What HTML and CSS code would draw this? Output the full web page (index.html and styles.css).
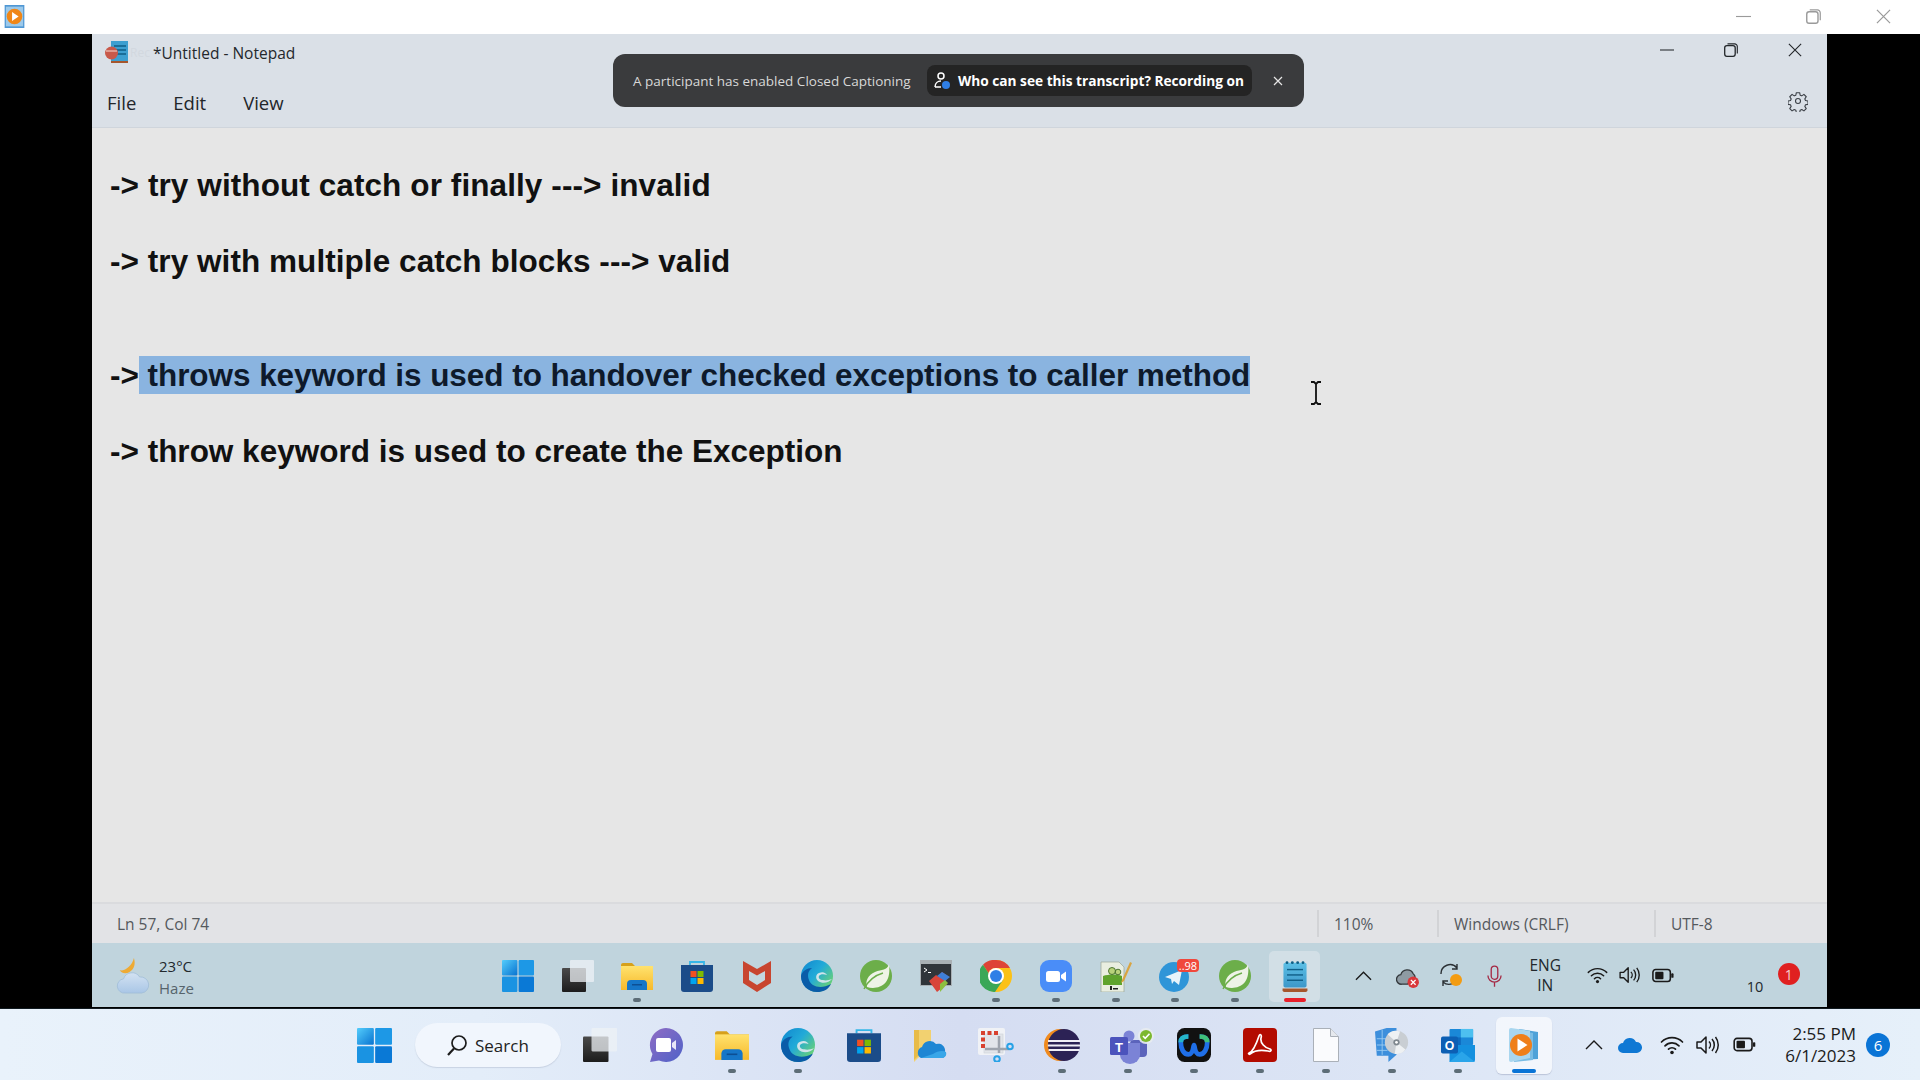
FILE: index.html
```html
<!DOCTYPE html>
<html lang="en">
<head>
<meta charset="utf-8">
<title>Untitled - Notepad</title>
<link rel="stylesheet" href="styles.css">
</head>
<body>
<svg class="defs" aria-hidden="true">
  <defs>
    <linearGradient id="gStart" x1="0" y1="0" x2="1" y2="1"><stop offset="0" stop-color="#54cdfc"/><stop offset="1" stop-color="#0873d0"/></linearGradient>
    <linearGradient id="gFolder" x1="0" y1="0" x2="0" y2="1"><stop offset="0" stop-color="#ffe26e"/><stop offset="1" stop-color="#f7b92a"/></linearGradient>
    <linearGradient id="gEdge" x1="0" y1="0" x2="1" y2=".8"><stop offset="0" stop-color="#0f86cf"/><stop offset=".5" stop-color="#22aad8"/><stop offset="1" stop-color="#72d66a"/></linearGradient>
    <linearGradient id="gDark" x1="0" y1="0" x2="0" y2="1"><stop offset="0" stop-color="#4a4a4a"/><stop offset="1" stop-color="#1c1c1c"/></linearGradient>
    <linearGradient id="gMeet" x1="0" y1="0" x2="1" y2="1"><stop offset="0" stop-color="#8f6cc4"/><stop offset="1" stop-color="#4f62c8"/></linearGradient>
    <linearGradient id="gPad" x1="0" y1="0" x2="0" y2="1"><stop offset="0" stop-color="#5cc0e6"/><stop offset="1" stop-color="#3d97c9"/></linearGradient>
    <linearGradient id="gCloud" x1="0" y1="0" x2="0" y2="1"><stop offset="0" stop-color="#d3e2f2"/><stop offset="1" stop-color="#a9c6e6"/></linearGradient>

    <symbol id="i-start" viewBox="0 0 32 32"><rect width="15.4" height="15.4" rx="1" fill="url(#gStart)"/><rect x="16.6" width="15.4" height="15.4" rx="1" fill="#1d98e6"/><rect y="16.6" width="15.4" height="15.4" rx="1" fill="#1a93e2"/><rect x="16.6" y="16.6" width="15.4" height="15.4" rx="1" fill="#0a79d6"/></symbol>
    <symbol id="i-task" viewBox="0 0 32 32"><rect x="0" y="8" width="24" height="24" rx="1" fill="url(#gDark)"/><rect x="8" y="0" width="24" height="22" rx="1" fill="#eef1f5" opacity=".75"/></symbol>
    <symbol id="i-folder" viewBox="0 0 32 32"><path d="M0 5a2 2 0 0 1 2-2h9l3 3h18v3H0z" fill="#d6a01b"/><rect y="6" width="32" height="24" fill="url(#gFolder)"/><path d="M6 30v-6a4 4 0 0 1 4-4h12a4 4 0 0 1 4 4v6z" fill="#1676c8"/><rect x="11" y="24" width="10" height="1.5" fill="#0d4f93"/></symbol>
    <symbol id="i-store" viewBox="0 0 32 32"><path d="M9 5V2h14v3" fill="none" stroke="#35b6e8" stroke-width="1.8"/><path d="M0 5h32v24a3 3 0 0 1-3 3H3a3 3 0 0 1-3-3z" fill="#1b4c89"/><rect x="9.500" y="11" width="6" height="6" fill="#f25022"/><rect x="16.500" y="11" width="6" height="6" fill="#7fba00"/><rect x="9.500" y="18" width="6" height="6" fill="#00a4ef"/><rect x="16.500" y="18" width="6" height="6" fill="#ffb900"/></symbol>
    <symbol id="i-mcafee" viewBox="0 0 32 32"><path d="M2 1l14 8 14-8v22L16 32 2 23z" fill="#c8452f"/><path d="M8 11l8 4.500 8-4.500v9l-8 5-8-5z" fill="#c3d7df"/></symbol>
    <symbol id="i-edge" viewBox="0 0 32 32"><circle cx="16" cy="16" r="16" fill="url(#gEdge)"/><path d="M30 24C27 30 22 32 16 32 7 32 0 25 0 16 1 11 6 8 11 8 7 11 6 15 8 20c2 6 11 10 22 4z" fill="#0a5ca8"/><path d="M31 19c-3 4-10 5-14 2-3-3-2-7 1-8 4-2 7 0 8 2-3-1-7-1-8 1-1 2 1 4 4 4 3 1 6 0 9-1z" fill="#d0e3ea"/></symbol>
    <symbol id="i-spring" viewBox="0 0 32 32"><circle cx="16" cy="16" r="16" fill="#6cae4a"/><path d="M29 4C27 11 22 9 15 12 8 15 5 21 7 27c6 2 14 1 19-5 3-4 4-11 3-18z" fill="#eef3e6"/><path d="M4 29c5-10 12-14 19-16" stroke="#6cae4a" stroke-width="1.400" fill="none"/></symbol>
    <symbol id="i-term" viewBox="0 0 32 32"><rect width="32" height="26" fill="#a9b0b4"/><rect x="1" y="4" width="30" height="21" fill="#30353a"/><path d="M4 8l3 2-3 2" fill="none" stroke="#fff" stroke-width="1"/><rect x="8" y="12" width="3" height="1" fill="#fff"/><path d="M9 21l7-6 3 2 3-5 7 5-4 4 2 3-10 8z" fill="#d8453a"/><path d="M17 16l5-4 8 5-5 4z" fill="#3f7fd8"/><path d="M20 24l5-4 3 3-8 9z" fill="#8cbf3f"/></symbol>
    <symbol id="i-chrome" viewBox="0 0 32 32"><circle cx="16" cy="16" r="16" fill="#fbc116"/><path d="M16 0a16 16 0 0 1 13.900 8H16a8 8 0 0 0-7.500 5L3 4.700A16 16 0 0 1 16 0z" fill="#de4437"/><path d="M3 4.700L8.500 13 15 24l-1 7.900A16 16 0 0 1 3 4.700z" fill="#3aa757"/><path d="M8 16l8 8 7-4-8 12h-1z" fill="#3aa757"/><circle cx="16" cy="16" r="8" fill="#fff"/><circle cx="16" cy="16" r="6" fill="#2f7fe6"/></symbol>
    <symbol id="i-zoom" viewBox="0 0 32 32"><rect width="32" height="32" rx="9" fill="#4a8df8"/><rect x="6" y="11" width="14" height="11" rx="2.500" fill="#fff"/><path d="M21 15l5-3.500v10L21 18z" fill="#fff"/></symbol>
    <symbol id="i-npp" viewBox="0 0 32 32"><path d="M1 2h18l5 5v25H1z" fill="#e9eee0" stroke="#9aa595" stroke-width=".7"/><path d="M3 16c6-2 14-2 19 0v9H3z" fill="#5fa32c"/><circle cx="12" cy="11" r="3.500" fill="#b8d27a" stroke="#2d5a16" stroke-width=".8"/><circle cx="18" cy="12" r="2.800" fill="#b8d27a" stroke="#2d5a16" stroke-width=".8"/><rect x="10" y="26" width="2" height="4" fill="#222"/><rect x="13" y="28" width="5" height="1.500" fill="#222"/><path d="M22 20L30 2l2 1-8 18-3 2z" fill="#d9a441"/></symbol>
    <symbol id="i-tg" viewBox="0 0 32 32"><circle cx="15" cy="17" r="15" fill="#2f95d8"/><path d="M6 17l17-7-3 15-5-4-2 3-1-5z" fill="#e8f3fa"/></symbol>
    <symbol id="i-notepad" viewBox="0 0 32 36"><rect x="3" y="3" width="26" height="28" rx="2" fill="url(#gPad)"/><g fill="#0f5f86"><circle cx="7" cy="3" r="1.600"/><circle cx="13" cy="3" r="1.600"/><circle cx="19" cy="3" r="1.600"/><circle cx="25" cy="3" r="1.600"/></g><g fill="#105f88"><rect x="7" y="10" width="18" height="1.600"/><rect x="7" y="16" width="18" height="1.600"/><rect x="7" y="22" width="18" height="1.600"/></g><path d="M2 32h28v2a2 2 0 0 1-2 2H4a2 2 0 0 1-2-2z" fill="#a5562d"/></symbol>
    <symbol id="i-meet" viewBox="0 0 34 34"><path d="M17 0a17 17 0 1 1-7 32.500L1 34l2.500-8A17 17 0 0 1 17 0z" fill="url(#gMeet)"/><rect x="7" y="10" width="15" height="14" rx="2" fill="#fff"/><path d="M23 15l4-3v10l-4-3z" fill="#e8e6f8"/></symbol>
    <symbol id="i-files" viewBox="0 0 32 34"><path d="M0 2h17v26H6l-6 6z" fill="#f5cf62" opacity=".9"/><path d="M0 2v30l5-5V2z" fill="#e8bb48"/><path d="M7 30a6 6 0 0 1 1-11 8 8 0 0 1 14-3 7 7 0 0 1 9 8 5 5 0 0 1-2 6z" fill="#1e86d4"/><path d="M7 30h22a5 5 0 0 0 3-6c-3-2-9-1-13 2z" fill="#39a6e8"/></symbol>
    <symbol id="i-snip" viewBox="0 0 36 34"><rect width="27" height="27" rx="2" fill="#f0f2f6"/><rect x="6" y="6" width="19" height="19" fill="#e2e5ea" stroke="#cdd1d8" stroke-width=".6"/><g fill="#d8412f"><rect x="3" y="3" width="4" height="4"/><rect x="9.500" y="3" width="4" height="4"/><rect x="16" y="3" width="4" height="4"/><rect x="3" y="9.500" width="4" height="4"/><rect x="3" y="16" width="4" height="4"/></g><path d="M7 21h24M21 8v17" stroke="#9ea4ad" stroke-width="2.500" fill="none"/><circle cx="32" cy="18.500" r="2.800" fill="none" stroke="#27a2e6" stroke-width="2"/><circle cx="19" cy="31" r="2.800" fill="none" stroke="#27a2e6" stroke-width="2"/></symbol>
    <symbol id="i-eclipse" viewBox="0 0 36 34"><circle cx="16" cy="17" r="16" fill="#f08a1d"/><circle cx="20" cy="17" r="16" fill="#2c2255"/><g fill="#f1eff7"><rect x="4" y="12" width="32" height="2"/><rect x="3.800" y="16.500" width="32.400" height="2"/><rect x="4.600" y="21" width="31" height="2"/></g></symbol>
    <symbol id="i-teams" viewBox="0 0 44 36"><circle cx="19" cy="8" r="5.500" fill="#7b83d6"/><rect x="20" y="12" width="17" height="17" rx="4" fill="#5b63bb"/><path d="M10 15h20v12a10 9 0 0 1-20 0z" fill="#7b83d6"/><rect y="9" width="18" height="18" rx="1.500" fill="#4b53bc"/><text class="svg-t" x="9" y="23.500" text-anchor="middle">T</text><circle cx="36" cy="8" r="8" fill="#e8ecef" opacity=".9"/><circle cx="36" cy="8" r="6" fill="#7cb82f"/><path d="M33 8l2.200 2.300L39.500 5.700" fill="none" stroke="#fff" stroke-width="1.600"/></symbol>
    <symbol id="i-webex" viewBox="0 0 36 36"><rect width="36" height="36" rx="8" fill="#111"/><path d="M12 9C7 9 4 11 4 15c0 7 3 13 8 13 6 0 5-10 6-10s0 10 6 10c5 0 8-6 8-13 0-4-3-6-8-6" fill="none" stroke="#1f6fe8" stroke-width="5"/><path d="M24 9c5 0 8 2 8 6" stroke="#3fc07a" stroke-width="5" fill="none"/><path d="M12 9C7 9 4 11 4 15" stroke="#26b6c8" stroke-width="5" fill="none"/></symbol>
    <symbol id="i-acrobat" viewBox="0 0 34 34"><rect width="34" height="34" rx="4" fill="#b30b00"/><path d="M6 25c3-1 7-8 10-17 1-3 3-1 2 2-1 5 4 10 9 11 2 1 1 3-2 2-6-1-13-1-18 3-1 1-2-1-1-1z" fill="none" stroke="#fff" stroke-width="1.700"/></symbol>
    <symbol id="i-file" viewBox="0 0 26 34"><path d="M.5.500h17l8 8v25H.5z" fill="#fafbfd" stroke="#aab0b8"/><path d="M17.500.500v8h8" fill="#e6e9ee" stroke="#aab0b8"/></symbol>
    <symbol id="i-disc" viewBox="0 0 38 38"><path d="M0 4L13 0h11v30l-9 8v-7H2z" fill="#3d8fdc"/><path d="M2 12h12M2 19h12M2 25h12M8 2v28" stroke="#9ccbf2" stroke-width="1"/><circle cx="24" cy="16" r="13" fill="#c9ced3"/><path d="M24 16L14 7a13 13 0 0 1 14-3zM24 16l10 8a13 13 0 0 1-12 5z" fill="#eef1f3"/><circle cx="24" cy="16" r="3.500" fill="#7e878e"/><circle cx="24" cy="16" r="1.500" fill="#fff"/></symbol>
    <symbol id="i-outlook" viewBox="0 0 36 36"><rect x="9" y="1" width="25" height="17" rx="1" fill="#1a88d8"/><rect x="21" y="1" width="13" height="9" fill="#4dc0f0"/><rect x="9" y="10" width="12" height="9" fill="#0e6abf"/><path d="M9 18h27v16a2 2 0 0 1-2 2H9z" fill="#1490df"/><path d="M9 36l13-11 14 11z" fill="#2aa5ea"/><rect y="9" width="18" height="18" rx="2" fill="#0c5fb4"/><text class="svg-o" x="9" y="23.500" text-anchor="middle">O</text></symbol>
    <symbol id="i-player" viewBox="0 0 30 34"><path d="M10 1l19 3v27L10 32z" fill="#4fa2d8"/><path d="M5 2l19 3v27L5 34z" fill="#79bce4"/><path d="M0 2a2 2 0 0 1 2-2l19 3v27L2 34a2 2 0 0 1-2-2z" fill="#a9d6ef"/><circle cx="12" cy="17" r="11" fill="#ef7f1a"/><path d="M8.500 10.500l10 6.500-10 6.500z" fill="#fff"/></symbol>
    <symbol id="i-wifi" viewBox="0 0 24 20"><g fill="none" stroke="#1a1a1a" stroke-width="1.700" stroke-linecap="round"><path d="M1.500 7a15 15 0 0 1 21 0"/><path d="M5 10.800a10 10 0 0 1 14 0"/><path d="M8.500 14.200a5 5 0 0 1 7 0"/></g><circle cx="12" cy="17.500" r="1.800" fill="#1a1a1a"/></symbol>
    <symbol id="i-vol" viewBox="0 0 24 20"><g fill="none" stroke="#1a1a1a" stroke-width="1.500"><path d="M1 7h4l5-5v16l-5-5H1z" stroke-linejoin="round"/><path d="M13 6.500a5 5 0 0 1 0 7"/><path d="M16 4a9 9 0 0 1 0 12"/><path d="M19.500 2a13 13 0 0 1 0 16"/></g></symbol>
    <symbol id="i-bat" viewBox="0 0 24 16"><rect x="1" y="1.500" width="19" height="13" rx="3" fill="none" stroke="#1a1a1a" stroke-width="1.700"/><rect x="3.500" y="4" width="9" height="8" rx="1" fill="#1a1a1a"/><rect x="21" y="5.500" width="2.500" height="5" rx="1" fill="#1a1a1a"/></symbol>
    <symbol id="i-chev" viewBox="0 0 18 10"><path d="M1 9l8-8 8 8" fill="none" stroke="#1a1a1a" stroke-width="1.400"/></symbol>
    <symbol id="i-min" viewBox="0 0 16 16"><path d="M0 8h16" stroke="currentColor" stroke-width="1.200"/></symbol>
    <symbol id="i-max" viewBox="0 0 16 16"><rect x=".8" y="3" width="12" height="12.200" rx="2.500" fill="none" stroke="currentColor" stroke-width="1.500"/><path d="M4 1h8a3 3 0 0 1 3.200 3v8" fill="none" stroke="currentColor" stroke-width="1.300"/></symbol>
    <symbol id="i-x" viewBox="0 0 16 16"><path d="M1 1l14 14M15 1L1 15" stroke="currentColor" stroke-width="1.300"/></symbol>
  </defs>
</svg>

<header class="appbar">
  <svg class="app-logo" viewBox="0 0 24 28"><rect width="24" height="28" fill="#4f97d4"/><rect x="1.500" y="2" width="21" height="24" fill="#9cc9ea"/><circle cx="12" cy="14" r="9.500" fill="#f08616"/><path d="M9 8.500l8 5.500-8 5.500z" fill="#fff"/></svg>
  <div class="caption-btns caption-top">
    <button class="cap"><svg class="ico-15"><use href="#i-min"/></svg></button>
    <button class="cap"><svg class="ico-15"><use href="#i-max"/></svg></button>
    <button class="cap"><svg class="ico-15"><use href="#i-x"/></svg></button>
  </div>
</header>

<main class="stage">
  <section class="win">
    <div class="win-head">
      <div class="title-row">
        <svg class="np-logo" viewBox="0 0 24 24"><rect x="6" y="1" width="17" height="20" fill="#3d9fd0"/><path d="M9 6h12M9 10h12M9 14h12" stroke="#0f5f86" stroke-width="1.300"/><rect x="6" y="21" width="17" height="2" fill="#a5562d"/><circle cx="6.500" cy="13" r="6.500" fill="#c8594a"/><path d="M1 11h11" stroke="#e8b0a6" stroke-width="1.500"/></svg>
        <span class="ghost">Rec</span>
        <span class="win-title">*Untitled - Notepad</span>
        <div class="caption-btns caption-np">
          <button class="cap"><svg class="ico-14"><use href="#i-min"/></svg></button>
          <button class="cap"><svg class="ico-14"><use href="#i-max"/></svg></button>
          <button class="cap"><svg class="ico-14"><use href="#i-x"/></svg></button>
        </div>
      </div>
      <div class="menu-row">
        <span>File</span><span>Edit</span><span>View</span>
        <svg class="gear" viewBox="0 0 24 24"><path d="M10 2h4l.6 3 1.900.8 2.600-1.700 2.800 2.800-1.700 2.600.8 1.900 3 .6v4l-3 .6-.8 1.900 1.700 2.600-2.800 2.800-2.600-1.700-1.900.8-.6 3h-4l-.6-3-1.900-.8-2.600 1.700-2.800-2.800 1.700-2.600-.8-1.900-3-.6v-4l3-.6.8-1.900-1.700-2.600 2.800-2.800 2.600 1.700 1.900-.8z" fill="none" stroke="#3a3f45" stroke-width="1.300" stroke-linejoin="round"/><circle cx="12" cy="12" r="3" fill="none" stroke="#3a3f45" stroke-width="1.300"/></svg>
      </div>
      <div class="toast">
        <span class="toast-msg">A participant has enabled Closed Captioning</span>
        <span class="toast-chip">
          <svg class="chip-ico" viewBox="0 0 16 18"><circle cx="7" cy="4" r="3" fill="none" stroke="#fff" stroke-width="1.500"/><path d="M1 15c0-4 3-6 6-6" fill="none" stroke="#fff" stroke-width="1.500"/><path d="M1 15h6" stroke="#fff" stroke-width="1.500"/><circle cx="12" cy="13" r="4" fill="#2f7fe6"/></svg>
          <span>Who can see this transcript? Recording on</span>
        </span>
        <svg class="toast-x" viewBox="0 0 10 10"><path d="M1 1l8 8M9 1L1 9" stroke="#e6e6e6" stroke-width="1.200"/></svg>
      </div>
    </div>

    <div class="editor">
      <div class="line line-a">-&gt; try without catch or finally ---&gt; invalid</div>
      <div class="line"></div>
      <div class="line line-b">-&gt; try with multiple catch blocks ---&gt; valid</div>
      <div class="line"></div>
      <div class="line"></div>
      <div class="line line-c">-&gt;<span class="sel"> throws keyword is used to handover checked exceptions to caller method</span></div>
      <div class="line"></div>
      <div class="line">-&gt; throw keyword is used to create the Exception</div>
      <svg class="ibeam" viewBox="0 0 14 24"><path d="M2 1h3l2 2 2-2h3M2 23h3l2-2 2 2h3M7 3v18" fill="none" stroke="#111" stroke-width="1.800"/></svg>
    </div>

    <div class="status">
      <span class="st-main">Ln 57, Col 74</span>
      <span class="st-cell st-zoom">110%</span>
      <span class="st-cell st-eol">Windows (CRLF)</span>
      <span class="st-cell st-enc">UTF-8</span>
    </div>

    <div class="inner-bar">
      <div class="weather">
        <svg class="wx-ico" viewBox="0 0 34 38"><path d="M18 0c2 7 0 12-5 15-4 2-8 1-10-2 6 1 13-5 15-13z" fill="#eeaa34"/><path d="M9 37a7.500 7.500 0 0 1-2-15 9.500 9.500 0 0 1 17-2 8.500 8.500 0 0 1 2 17z" fill="url(#gCloud)" stroke="#9fbbd8" stroke-width=".8"/></svg>
        <div class="wx-text"><span class="wx-temp">23°C</span><span class="wx-sub">Haze</span></div>
      </div>
      <div class="in-apps">
        <div class="in-slot"><div class="in-tile"><svg class="ico-32"><use href="#i-start"/></svg></div></div>
        <div class="in-slot"><div class="in-tile"><svg class="ico-32"><use href="#i-task"/></svg></div></div>
        <div class="in-slot"><div class="in-tile"><svg class="ico-32"><use href="#i-folder"/></svg><i class="dot"></i></div></div>
        <div class="in-slot"><div class="in-tile"><svg class="ico-32"><use href="#i-store"/></svg></div></div>
        <div class="in-slot"><div class="in-tile"><svg class="ico-32"><use href="#i-mcafee"/></svg></div></div>
        <div class="in-slot"><div class="in-tile"><svg class="ico-32"><use href="#i-edge"/></svg></div></div>
        <div class="in-slot"><div class="in-tile"><svg class="ico-32"><use href="#i-spring"/></svg></div></div>
        <div class="in-slot"><div class="in-tile"><svg class="ico-32"><use href="#i-term"/></svg></div></div>
        <div class="in-slot"><div class="in-tile"><svg class="ico-32"><use href="#i-chrome"/></svg><i class="dot"></i></div></div>
        <div class="in-slot"><div class="in-tile"><svg class="ico-32"><use href="#i-zoom"/></svg><i class="dot"></i></div></div>
        <div class="in-slot"><div class="in-tile"><svg class="ico-32"><use href="#i-npp"/></svg><i class="dot"></i></div></div>
        <div class="in-slot"><div class="in-tile tg-tile"><svg class="ico-32"><use href="#i-tg"/></svg><span class="tg-badge">..98</span><i class="dot"></i></div></div>
        <div class="in-slot"><div class="in-tile"><svg class="ico-32"><use href="#i-spring"/></svg><i class="dot"></i></div></div>
        <div class="in-slot"><div class="in-tile in-active"><svg class="ico-32"><use href="#i-notepad"/></svg><i class="dot dot-red"></i></div></div>
      </div>
      <div class="in-tray">
        <svg class="t-chev"><use href="#i-chev"/></svg>
        <svg class="t-cloud" viewBox="0 0 24 22"><path d="M6 18a5 5 0 0 1-1-10 7 7 0 0 1 13-1 5 5 0 0 1 2 4v2l-8 5z" fill="#8e9ba3" stroke="#33383c" stroke-width="1.400"/><circle cx="18" cy="16" r="6" fill="#d9373a"/><path d="M15.500 13.500l5 5M20.500 13.500l-5 5" stroke="#fff" stroke-width="1.400"/></svg>
        <svg class="t-sync" viewBox="0 0 22 24"><path d="M1 11a9 9 0 0 1 16-6M17 1v5h-5M18 13a9 9 0 0 1-15 6M3 23v-5h5" fill="none" stroke="#2b3034" stroke-width="1.400"/><circle cx="16" cy="17" r="6" fill="#f39c12"/></svg>
        <svg class="t-mic" viewBox="0 0 16 24"><rect x="4.500" y="1" width="7" height="14" rx="3.500" fill="none" stroke="#a52a45" stroke-width="1.400"/><path d="M1 11a7 7 0 0 0 14 0M8 18v5" fill="none" stroke="#a52a45" stroke-width="1.400"/></svg>
        <div class="t-lang"><span>ENG</span><span>IN</span></div>
        <svg class="t-wifi"><use href="#i-wifi"/></svg>
        <svg class="t-vol"><use href="#i-vol"/></svg>
        <svg class="t-bat"><use href="#i-bat"/></svg>
        <span class="t-num">10</span>
        <span class="t-badge">1</span>
      </div>
    </div>
  </section>
</main>

<footer class="outer-bar">
  <svg class="o-start"><use href="#i-start"/></svg>
  <div class="search">
    <svg class="search-ico" viewBox="0 0 20 22"><circle cx="12" cy="9" r="7" fill="none" stroke="#1c1c1c" stroke-width="1.700"/><path d="M7 14.500L1 21" stroke="#1c1c1c" stroke-width="2.200"/></svg>
    <span>Search</span>
  </div>
  <div class="out-apps">
    <div class="out-slot"><div class="out-tile"><svg class="ico-36"><use href="#i-task"/></svg></div></div>
    <div class="out-slot"><div class="out-tile"><svg class="ico-36"><use href="#i-meet"/></svg></div></div>
    <div class="out-slot"><div class="out-tile"><svg class="ico-36"><use href="#i-folder"/></svg><i class="dot"></i></div></div>
    <div class="out-slot"><div class="out-tile"><svg class="ico-36"><use href="#i-edge"/></svg><i class="dot"></i></div></div>
    <div class="out-slot"><div class="out-tile"><svg class="ico-36"><use href="#i-store"/></svg></div></div>
    <div class="out-slot"><div class="out-tile"><svg class="ico-36"><use href="#i-files"/></svg></div></div>
    <div class="out-slot"><div class="out-tile"><svg class="ico-36"><use href="#i-snip"/></svg></div></div>
    <div class="out-slot"><div class="out-tile"><svg class="ico-36"><use href="#i-eclipse"/></svg><i class="dot"></i></div></div>
    <div class="out-slot"><div class="out-tile"><svg class="ico-teams"><use href="#i-teams"/></svg><i class="dot"></i></div></div>
    <div class="out-slot"><div class="out-tile"><svg class="ico-36"><use href="#i-webex"/></svg><i class="dot"></i></div></div>
    <div class="out-slot"><div class="out-tile"><svg class="ico-36"><use href="#i-acrobat"/></svg><i class="dot"></i></div></div>
    <div class="out-slot"><div class="out-tile"><svg class="ico-36"><use href="#i-file"/></svg><i class="dot"></i></div></div>
    <div class="out-slot"><div class="out-tile"><svg class="ico-36"><use href="#i-disc"/></svg><i class="dot"></i></div></div>
    <div class="out-slot"><div class="out-tile"><svg class="ico-36"><use href="#i-outlook"/></svg><i class="dot"></i></div></div>
    <div class="out-slot"><div class="out-tile out-active"><svg class="ico-36"><use href="#i-player"/></svg><i class="dot dot-blue"></i></div></div>
  </div>
  <div class="out-tray">
    <svg class="o-chev"><use href="#i-chev"/></svg>
    <svg class="o-drive" viewBox="0 0 24 16"><path d="M5 16a5 5 0 0 1 0-10 7 7 0 0 1 13-1 5.500 5.500 0 0 1 1 11z" fill="#0f78d4"/></svg>
    <svg class="o-wifi"><use href="#i-wifi"/></svg>
    <svg class="o-vol"><use href="#i-vol"/></svg>
    <svg class="o-bat"><use href="#i-bat"/></svg>
    <div class="clock"><span>2:55 PM</span><span>6/1/2023</span></div>
    <span class="o-badge">6</span>
  </div>
</footer>
</body>
</html>
```

FILE: styles.css
```css
* { box-sizing: border-box; }
html, body { margin: 0; padding: 0; }
body {
  width: 1920px; height: 1080px; overflow: hidden;
  display: flex; flex-direction: column;
  font-family: "Open Sans", "Noto Sans", sans-serif;
  color: #1c1c1c; background: #000;
}
.defs { display: block; width: 0; height: 0; }
svg { display: block; flex: none; }
button { border: 0; background: none; padding: 0; color: inherit; display: flex; justify-content: center; align-items: center; }

/* top player bar */
.appbar { height: 34px; flex: none; background: #fff; display: flex; align-items: flex-start; padding: 5px 0 0 3px; }
.app-logo { width: 23px; height: 23px; }
.caption-btns { display: flex; margin-left: auto; }
.caption-top { color: #9a9a9a; margin-top: -1px; padding-right: 2px; }
.caption-top .cap { width: 70px; height: 24px; }
.ico-15 { width: 15px; height: 15px; }
.ico-14 { width: 14px; height: 14px; }

/* stage + window */
.stage { height: 974px; flex: none; background: #000; padding: 0 93px 1px 92px; display: flex; }
.win { flex: 1; display: flex; flex-direction: column; }
.win-head { height: 94px; flex: none; background: #dae0e7; border-bottom: 1px solid #cfd5dc; position: relative; }
.title-row { height: 36px; display: flex; align-items: center; padding-left: 13px; }
.np-logo { width: 24px; height: 24px; }
.ghost { width: 23px; font-size: 12px; color: #d2d8df; margin-left: 1px; overflow: hidden; }
.win-title { font-size: 15.5px; color: #24282c; margin-top: 2px; }
.caption-np { color: #23272b; margin-top: -4px; }
.caption-np .cap { width: 64px; height: 24px; }
.menu-row { height: 57px; padding: 7px 19px 0 15px; display: flex; align-items: center; gap: 37px; font-size: 18.5px; color: #22262a; }
.gear { width: 20px; height: 22px; margin-left: auto; margin-top: -3px; }

/* toast */
.toast {
  position: absolute; left: 521px; top: 20px; width: 691px; height: 53px;
  background: #3a3b3d; border-radius: 12px; display: flex; align-items: center;
  padding-left: 20px;
}
.toast-msg { width: 294px; font-size: 13.5px; color: #d8d8d8; white-space: nowrap; }
.toast-chip {
  width: 325px; height: 31px; background: #242424; border-radius: 8px;
  display: flex; align-items: center; gap: 8px; padding-left: 7px;
  font-size: 13.7px; font-weight: 700; color: #fff; white-space: nowrap;
}
.chip-ico { width: 16px; height: 18px; }
.toast-x { width: 10px; height: 10px; margin-left: 21px; }

/* editor */
.editor {
  height: 774px; flex: none; background: #e6e6e6; padding: 38px 0 0 18px; position: relative;
  font-family: "Liberation Sans", Arial, sans-serif; font-weight: 700; font-size: 31.5px; line-height: 38px; color: #111;
}
.line { height: 38px; white-space: pre; }
.line-a { letter-spacing: .09px; }
.line-b { letter-spacing: .055px; }
.line-c { letter-spacing: -.05px; }
.sel { display: inline-block; background: #8ab4e0; color: #0e1a2b; height: 38px; }
.ibeam { position: absolute; left: 1217px; top: 253px; width: 14px; height: 24px; }

/* status */
.status { height: 41px; flex: none; background: #e2e3e6; border-top: 2px solid #dadbde; display: flex; align-items: center; font-size: 15.5px; color: #55595d; }
.st-main { flex: 1; padding-left: 25px; }
.st-cell { height: 27px; border-left: 2px solid #d2d3d6; padding-left: 15px; display: flex; align-items: center; }
.st-zoom { width: 120px; }
.st-eol { width: 217px; }
.st-enc { width: 173px; }

/* inner taskbar */
.inner-bar { height: 64px; flex: none; background: #c0d4dd; display: flex; padding-left: 24px; }
.weather { width: 372px; flex: none; display: flex; gap: 9px; padding-top: 15px; }
.wx-ico { width: 34px; height: 36px; }
.wx-text { display: flex; flex-direction: column; font-size: 15px; line-height: 22px; margin-top: -3px; }
.wx-temp { color: #22282c; }
.wx-sub { color: #56646c; }
.in-apps { display: flex; flex: none; }
.in-slot { width: 59.77px; display: flex; justify-content: center; padding-top: 8px; }
.in-tile { width: 51px; height: 51px; padding-top: 9px; display: flex; flex-direction: column; align-items: center; border-radius: 5px; position: relative; }
.in-active { background: #d2dfe6; }
.ico-32 { width: 32px; height: 32px; }
.dot { width: 8px; height: 4px; border-radius: 2px; background: #5d6d77; margin-top: 6px; }
.dot-red { width: 22px; background: #e8202a; }
.tg-badge { position: absolute; left: 27px; top: 8px; background: #f0483c; color: #fff; font-size: 11px; line-height: 13px; padding: 0 2px; border-radius: 4px; }
.in-tray { display: flex; align-items: center; padding-left: 30px; }
.t-chev { width: 17px; height: 10px; margin-top: 2px; }
.t-cloud { width: 23px; height: 21px; margin-left: 24px; margin-top: 4px; }
.t-sync { width: 22px; height: 24px; margin-left: 21px; }
.t-mic { width: 15px; height: 23px; margin-left: 25px; margin-top: 2px; }
.t-lang { width: 31px; margin-left: 28px; display: flex; flex-direction: column; align-items: center; font-size: 15.5px; line-height: 20px; color: #22282c; }
.t-wifi { width: 21px; height: 18px; margin-left: 26px; }
.t-vol { width: 22px; height: 18px; margin-left: 11px; }
.t-bat { width: 22px; height: 15px; margin-left: 11px; }
.t-num { margin-left: 73px; width: 15px; font-size: 14.5px; color: #22282c; margin-top: 22px; }
.t-badge { margin-left: 16px; width: 22px; height: 22px; border-radius: 50%; background: #e02020; color: #f4d0d0; font-size: 14px; display: flex; align-items: center; justify-content: center; margin-top: -2px; }

/* outer taskbar */
.outer-bar {
  height: 72px; flex: none; display: flex; padding-left: 357px;
  background: linear-gradient(90deg, #e9f2fb 0%, #e3edf9 25%, #d5ddf2 50%, #dce5f5 72%, #e6f0fa 100%);
  border-top: 1px solid #101a20;
}
.o-start { width: 35px; height: 35px; margin-top: 19px; }
.search {
  width: 146px; height: 44px; margin: 14px 0 0 23px; border-radius: 22px;
  background: #f1f6fd; box-shadow: 0 1px 1px rgba(120,130,160,.25);
  display: flex; align-items: center; padding-left: 32px; gap: 8px; font-size: 17px; color: #222;
}
.search-ico { width: 20px; height: 22px; }
.out-apps { display: flex; margin-left: 6px; flex: none; }
.out-slot { width: 66px; display: flex; justify-content: center; padding-top: 8px; }
.out-tile { width: 56px; height: 57px; padding-top: 11px; display: flex; flex-direction: column; align-items: center; border-radius: 6px; }
.out-active { background: rgba(255,255,255,.62); box-shadow: 0 1px 1px rgba(120,130,160,.35); }
.ico-36 { width: 36px; height: 34px; }
.ico-teams { width: 44px; height: 36px; margin-left: 8px; margin-bottom: -2px; }
.out-tile .dot { margin-top: 7px; }
.dot-blue { width: 24px !important; background: #0a74d6; }
.svg-t { font: 700 13px "Liberation Sans", sans-serif; fill: #fff; }
.svg-o { font: 700 13px "Liberation Sans", sans-serif; fill: #fff; }
.out-tray { display: flex; align-items: center; flex: 1; padding-left: 28px; }
.o-chev { width: 18px; height: 10px; margin-top: 1px; }
.o-drive { width: 24px; height: 16px; margin-left: 15px; }
.o-wifi { width: 24px; height: 20px; margin-left: 18px; }
.o-vol { width: 24px; height: 20px; margin-left: 12px; }
.o-bat { width: 23px; height: 15px; margin-left: 13px; }
.clock { width: 100px; display: flex; flex-direction: column; align-items: flex-end; font-size: 17px; line-height: 22px; color: #1b1b1b; }
.o-badge { width: 24px; height: 24px; margin-left: 10px; border-radius: 50%; background: #0a74d6; color: #fff; font-size: 15px; display: flex; align-items: center; justify-content: center; }
```
